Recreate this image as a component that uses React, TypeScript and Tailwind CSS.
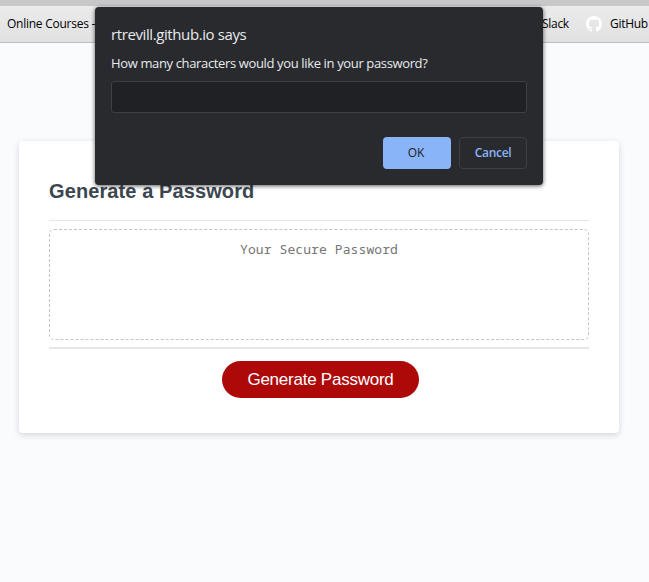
function GitHubMark() {
  return (
    <svg viewBox="0 0 16 16" className="h-4 w-4 shrink-0 fill-white" aria-hidden="true">
      <path d="M8 0C3.58 0 0 3.58 0 8c0 3.54 2.29 6.53 5.47 7.59.4.07.55-.17.55-.38 0-.19-.01-.82-.01-1.49-2.01.37-2.53-.49-2.69-.94-.09-.23-.48-.94-.82-1.13-.28-.15-.68-.52-.01-.53.63-.01 1.08.58 1.23.82.72 1.21 1.87.87 2.33.66.07-.52.28-.87.51-1.07-1.78-.2-3.64-.89-3.64-3.95 0-.87.31-1.59.82-2.15-.08-.2-.36-1.02.08-2.12 0 0 .67-.21 2.2.82.64-.18 1.32-.27 2-.27s1.36.09 2 .27c1.53-1.04 2.2-.82 2.2-.82.44 1.1.16 1.92.08 2.12.51.56.82 1.27.82 2.15 0 3.07-1.87 3.75-3.65 3.95.29.25.54.73.54 1.48 0 1.07-.01 1.93-.01 2.2 0 .21.15.46.55.38A8.01 8.01 0 0 0 16 8c0-4.42-3.58-8-8-8z" />
    </svg>
  );
}

function BookmarksBar() {
  return (
    <div className="flex h-[37px] items-center justify-between border-b border-[#bebebe] bg-linear-to-b from-[#ebebeb] to-[#e1e1e1] pl-[7px] font-['Open_Sans',sans-serif] text-[12px] whitespace-nowrap text-black">
      <span className="tracking-[-0.25px]">Online Courses -</span>
      <div className="flex w-[107px] shrink-0 items-center">
        <span className="w-[44px] tracking-[-0.3px]">Slack</span>
        <GitHubMark />
        <span className="ml-2 tracking-[-0.3px]">GitHub</span>
      </div>
    </div>
  );
}

function PromptDialog() {
  return (
    <div
      role="dialog"
      className="absolute top-[7px] left-[95px] flex h-[178px] w-[448px] flex-col rounded-[4px] bg-[#292a2d] px-4 font-['Open_Sans',sans-serif] whitespace-nowrap text-[#e8eaed] shadow-[0_1px_4px_rgba(0,0,0,0.65)]"
    >
      <h2 className="mt-[17px] h-5 text-[15px] leading-5 tracking-[-0.4px]">rtrevill.github.io says</h2>
      <p className="mt-[10px] h-[18px] text-[13px] leading-[18px] tracking-[-0.36px]">
        How many characters would you like in your password?
      </p>
      <input
        aria-label="Password length"
        className="mt-[9px] h-8 w-full rounded-[3px] border border-[#3c4043] bg-[#202124] px-2 outline-none"
      />
      <div className="mt-6 flex justify-end gap-2 text-[12px]">
        <button className="h-8 w-[68px] rounded-[4px] bg-[#8ab4f8] pr-[2px] font-medium text-[#202124]">OK</button>
        <button className="h-8 w-[68px] rounded-[4px] border border-[#3c4043] font-semibold tracking-[-0.3px] text-[#8ab4f8]">
          Cancel
        </button>
      </div>
    </div>
  );
}

function PasswordCard() {
  return (
    <main className="mt-[98px] ml-[19px] flex h-[292px] w-[600px] flex-col rounded-[4px] bg-white px-[30px] shadow-[0_2px_6px_rgba(60,66,77,0.2)]">
      <h1 className="mt-[37px] h-[26px] font-['Liberation_Sans',Arial,sans-serif] text-[20px] leading-[26px] font-bold tracking-[0.1px] text-[#3c4650]">
        Generate a Password
      </h1>
      <div className="mt-4 h-px shrink-0 bg-[#e6e6e6]" />
      <div className="mt-2 h-[111px] shrink-0 rounded-[5px] border border-dashed border-[#c2c5ca] pt-[10px] text-center font-['Noto_Sans_Mono','DejaVu_Sans_Mono',monospace] text-[13px] leading-[18px] tracking-[0.1px] text-[#757575]">
        Your Secure Password
      </div>
      <div className="mt-[7px] h-[2px] shrink-0 bg-[#e6e6e6]" />
      <button className="mt-3 ml-[173px] h-[37px] w-[197px] shrink-0 rounded-full bg-[#ae0909] font-['Liberation_Sans',Arial,sans-serif] text-[17px] tracking-[-0.24px] text-white">
        Generate Password
      </button>
    </main>
  );
}

export default function App() {
  return (
    <div className="relative h-[582px] w-[649px] overflow-hidden bg-[#fafbfd]">
      <div className="h-[6px] bg-[#c8c8c8]" />
      <BookmarksBar />
      <PasswordCard />
      <PromptDialog />
    </div>
  );
}
